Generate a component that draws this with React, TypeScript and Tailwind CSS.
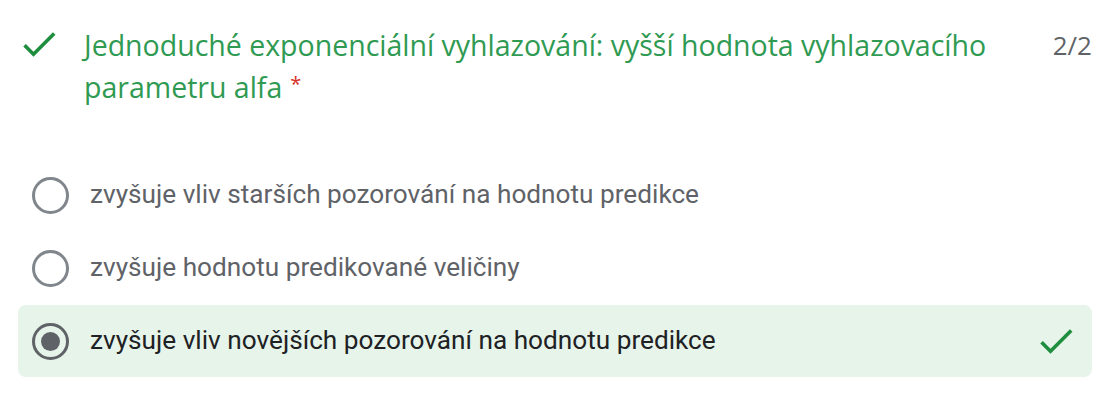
import React from "react";

const CheckIcon: React.FC<{ className?: string }> = ({ className }) => (
  <svg viewBox="0 0 24 24" className={className} aria-hidden="true">
    <path d="M9 16.17L4.83 12l-1.42 1.41L9 19 21 7l-1.41-1.41z" fill="currentColor" />
  </svg>
);

const options = [
  { text: "zvyšuje vliv starších pozorování na hodnotu predikce", selected: false },
  { text: "zvyšuje hodnotu predikované veličiny", selected: false },
  { text: "zvyšuje vliv novějších pozorování na hodnotu predikce", selected: true },
];

const App: React.FC = () => {
  return (
    <div className="w-[1115px] h-[406px] bg-white overflow-hidden font-['Roboto',sans-serif]">
      <div className="flex items-start pt-[24px] pl-[17px] pr-[23px]">
        <CheckIcon className="w-[44px] h-[44px] text-[#1e8e3e] -mt-[2px] shrink-0" />
        <h2 className="ml-[23px] w-[935px] text-[28.5px] leading-[42px] text-[#2f9a52] font-['Open_Sans',sans-serif]">
          Jednoduché exponenciální vyhlazování: vyšší hodnota vyhlazovacího parametru alfa
          <span className="ml-[8px] inline-block align-top text-[20px] leading-[36px] text-[#d93025]">*</span>
        </h2>
        <span className="ml-auto text-[26px] leading-[42px] text-[#5f6368] font-['Open_Sans',sans-serif]">2/2</span>
      </div>
      <div className="mt-[51px] ml-[18px] mr-[23px] flex flex-col gap-[1px]">
        {options.map((o) => (
          <div
            key={o.text}
            className={`flex items-center h-[72px] pl-[14px] pr-[14px] rounded-lg ${o.selected ? "bg-[#e6f4ea]" : ""}`}
          >
            <span
              className={`w-[37px] h-[37px] rounded-full border-[3px] flex items-center justify-center shrink-0 ${
                o.selected ? "border-[#5f6368]" : "border-[#80868b]"
              }`}
            >
              {o.selected && <span className="w-[19px] h-[19px] rounded-full bg-[#5f6368]" />}
            </span>
            <span className={`ml-[21px] text-[26.2px] ${o.selected ? "text-[#202124]" : "text-[#5f6368]"}`}>{o.text}</span>
            {o.selected && <CheckIcon className="ml-auto w-[44px] h-[44px] text-[#1e8e3e]" />}
          </div>
        ))}
      </div>
    </div>
  );
};

export default App;
